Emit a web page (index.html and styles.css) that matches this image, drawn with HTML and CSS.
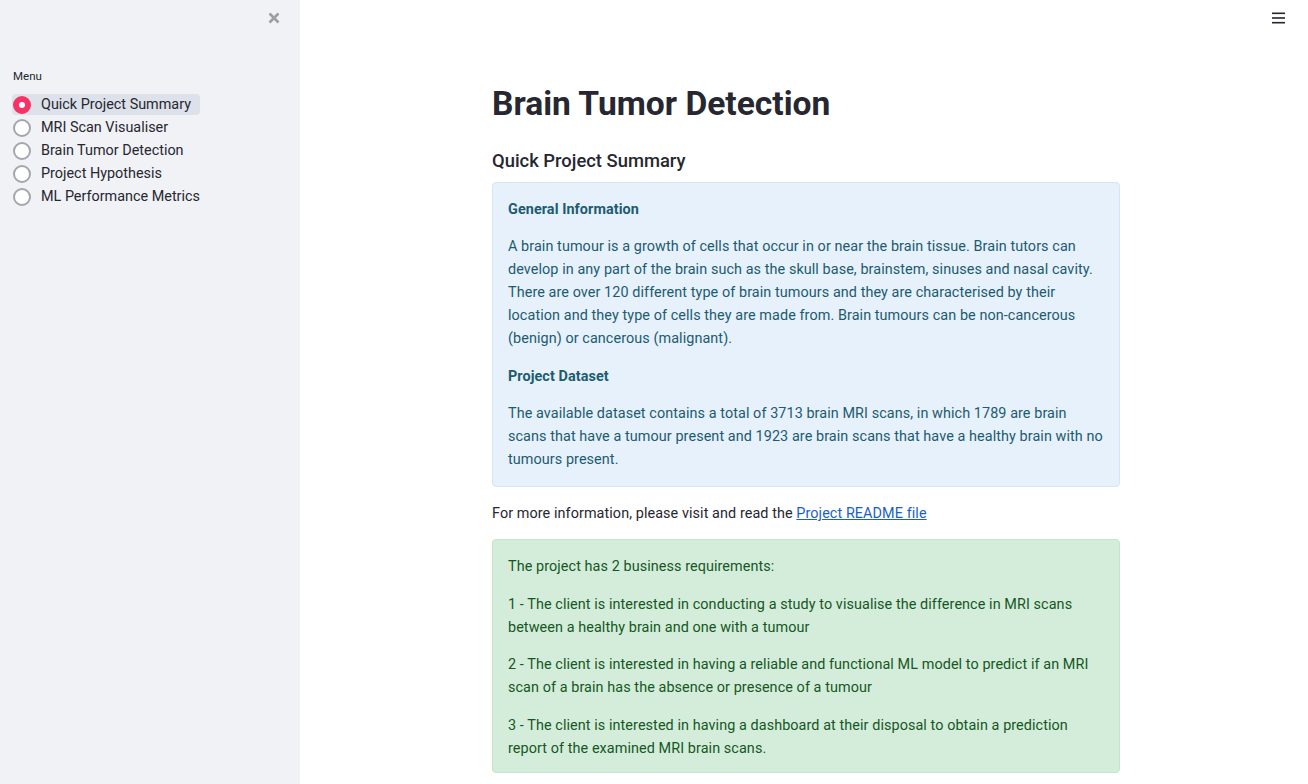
FILE: index.html
```html
<!DOCTYPE html>
<html lang="en">
<head>
<meta charset="utf-8">
<title>Brain Tumor Detection</title>
<link rel="stylesheet" href="styles.css">
</head>
<body>
<div class="app">
  <aside class="sidebar">
    <div class="sidebar-top">
      <button class="close-btn" aria-label="Close sidebar">
        <svg width="12" height="12" viewBox="0 0 12 12"><path d="M1.5 1.5 L10.5 10.5 M10.5 1.5 L1.5 10.5" stroke="#9c9ea6" stroke-width="2.6" stroke-linecap="butt"/></svg>
      </button>
    </div>
    <div class="menu-label">Menu</div>
    <ul class="radio-list">
      <li class="radio-item selected"><span class="radio-dot"></span><span class="radio-text">Quick Project Summary</span></li>
      <li class="radio-item"><span class="radio-dot"></span><span class="radio-text">MRI Scan Visualiser</span></li>
      <li class="radio-item"><span class="radio-dot"></span><span class="radio-text">Brain Tumor Detection</span></li>
      <li class="radio-item"><span class="radio-dot"></span><span class="radio-text">Project Hypothesis</span></li>
      <li class="radio-item"><span class="radio-dot"></span><span class="radio-text">ML Performance Metrics</span></li>
    </ul>
  </aside>
  <main class="main">
    <button class="hamburger" aria-label="Menu">
      <svg width="14" height="12" viewBox="0 0 14 12"><rect x="0" y="0.5" width="13" height="1.6" fill="#262730"/><rect x="0" y="5.2" width="13" height="1.6" fill="#262730"/><rect x="0" y="9.9" width="13" height="1.6" fill="#262730"/></svg>
    </button>
    <div class="content">
      <h1 class="title">Brain Tumor Detection</h1>
      <h3 class="subtitle">Quick Project Summary</h3>
      <div class="alert alert-info">
        <p><strong>General Information</strong></p>
        <p>A brain tumour is a growth of cells that occur in or near the brain tissue. Brain tutors can develop in any part of the brain such as the skull base, brainstem, sinuses and nasal cavity. There are over 120 different type of brain tumours and they are characterised by their location and they type of cells they are made from. Brain tumours can be non-cancerous (benign) or cancerous (malignant).</p>
        <p><strong>Project Dataset</strong></p>
        <p>The available dataset contains a total of 3713 brain MRI scans, in which 1789 are brain scans that have a tumour present and 1923 are brain scans that have a healthy brain with no tumours present.</p>
      </div>
      <p class="plain">For more information, please visit and read the <a href="#">Project README file</a></p>
      <div class="alert alert-success">
        <p>The project has 2 business requirements:</p>
        <p>1 - The client is interested in conducting a study to visualise the difference in MRI scans between a healthy brain and one with a tumour</p>
        <p>2 - The client is interested in having a reliable and functional ML model to predict if an MRI scan of a brain has the absence or presence of a tumour</p>
        <p>3 - The client is interested in having a dashboard at their disposal to obtain a prediction report of the examined MRI brain scans.</p>
      </div>
    </div>
  </main>
</div>
</body>
</html>
```
FILE: styles.css
```css
* { box-sizing: border-box; }
html, body {
  margin: 0;
  padding: 0;
  height: 100%;
  overflow: hidden;
}
body {
  font-family: "Roboto", "Liberation Sans", sans-serif;
  font-size: 14.4px;
  line-height: 23px;
  letter-spacing: 0.08px;
  color: #262730;
  background: #ffffff;
}
.app {
  display: flex;
  height: 784px;
}
.sidebar {
  width: 300px;
  flex: 0 0 300px;
  background: #f0f2f6;
  padding: 0 12px;
}
.sidebar-top {
  display: flex;
  justify-content: flex-end;
  padding: 12px 8px 0 0;
  height: 67px;
}
.close-btn {
  border: 0;
  background: transparent;
  padding: 0;
  width: 12px;
  height: 12px;
  display: flex;
  cursor: pointer;
}
.menu-label {
  font-size: 11.5px;
  line-height: 18px;
  height: 18px;
  margin-bottom: 8px;
  padding-left: 1px;
  letter-spacing: 0;
}
.radio-list {
  list-style: none;
  margin: 0;
  padding: 0;
}
.radio-item {
  display: flex;
  align-items: center;
  height: 23px;
  position: relative;
}
.radio-item.selected::before {
  content: "";
  position: absolute;
  left: 0;
  top: 1px;
  width: 188px;
  height: 21px;
  background: #dde1ea;
  border-radius: 4px;
  z-index: 0;
}
.radio-dot {
  position: relative;
  z-index: 1;
  width: 18px;
  height: 18px;
  border-radius: 50%;
  border: 2px solid #a3a6ae;
  background: #ffffff;
  margin: 0 10px 0 1px;
  flex: 0 0 18px;
}
.radio-item.selected .radio-dot {
  border-color: #f63366;
  background: #f63366;
}
.radio-item.selected .radio-dot::after {
  content: "";
  position: absolute;
  left: 4px;
  top: 4px;
  width: 6px;
  height: 6px;
  border-radius: 50%;
  background: #ffffff;
}
.radio-text {
  position: relative;
  z-index: 1;
  letter-spacing: 0;
}
.main {
  flex: 1;
  position: relative;
  padding-left: 192px;
}
.hamburger {
  position: absolute;
  top: 12px;
  right: 22px;
  border: 0;
  background: transparent;
  padding: 0;
  display: flex;
}
.content {
  width: 628px;
  padding-top: 84px;
}
.title {
  font-size: 33.6px;
  line-height: 40px;
  font-weight: 700;
  margin: 0 0 25px;
  color: #262730;
  letter-spacing: 0;
}
.subtitle {
  font-size: 18.4px;
  line-height: 24px;
  font-weight: 500;
  margin: 0 0 9px;
  color: #262730;
  letter-spacing: 0;
}
.alert {
  border-radius: 4px;
  border: 1px solid;
  padding: 14.5px 13px 14.5px 15px;
}
.alert p {
  margin: 0 0 14.5px;
}
.alert p:last-child { margin-bottom: 0; }
.alert strong { font-weight: 700; }
.alert-info {
  background: #e6f1fb;
  border-color: #d3e6f7;
  color: #1d5b6f;
}
.alert-success {
  background: #d4edda;
  border-color: #c3e6cb;
  color: #155724;
  padding: 15.5px 13px 12.5px 15px;
}
.plain {
  margin: 15.5px 0 13.5px;
}
.plain a {
  color: #1a5fc7;
  text-decoration: underline;
}
```
